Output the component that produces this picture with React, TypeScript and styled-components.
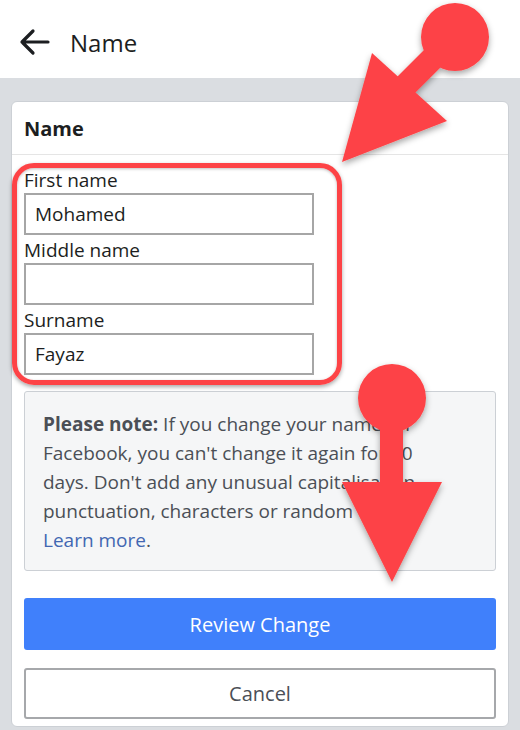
import React from "react";
import styled, { createGlobalStyle } from "styled-components";

const Global = createGlobalStyle`
  html, body { margin: 0; padding: 0; background: #dadde1; }
  body { font-family: "Open Sans", "Noto Sans", Arial, sans-serif; }
  * { box-sizing: border-box; }
`;

const Page = styled.div`
  position: relative;
  width: 520px;
  height: 730px;
  overflow: hidden;
  background: #dadde1;
  display: flex;
  flex-direction: column;
`;

const TopBar = styled.header`
  height: 78px;
  background: #ffffff;
  display: flex;
  align-items: center;
  gap: 20px;
  padding: 6px 0 0 18px;
  flex-shrink: 0;
`;

const TopTitle = styled.h1`
  margin: 0;
  font-size: 24px;
  font-weight: 400;
  color: #1c1e21;
`;

const Main = styled.main`
  padding: 23px 11px 0 11px;
  flex: 1;
`;

const Card = styled.section`
  background: #ffffff;
  border: 1px solid #ccd0d5;
  border-radius: 6px;
  height: 626px;
`;

const CardHead = styled.div`
  height: 53px;
  display: flex;
  align-items: center;
  padding: 0 12px;
  border-bottom: 1px solid #e5e5e5;
  font-size: 20px;
  font-weight: 700;
  color: #1c1e21;
`;

const CardBody = styled.div`
  padding: 10px 12px 9px 12px;
  display: flex;
  flex-direction: column;
`;

const Fields = styled.div`
  position: relative;
  display: flex;
  flex-direction: column;
  width: 290px;
`;

const Highlight = styled.div`
  position: absolute;
  left: -12px;
  top: -2px;
  width: 330px;
  height: 222px;
  border: 5px solid #fd4346;
  border-radius: 22px;
  box-shadow: 0 2px 4px rgba(0, 0, 0, 0.35), inset 0 1px 3px rgba(0, 0, 0, 0.25);
  pointer-events: none;
`;

const Label = styled.label`
  height: 28px;
  display: flex;
  align-items: flex-end;
  padding-bottom: 3px;
  font-size: 19px;
  color: #1c1e21;
  line-height: 1;
`;

const Input = styled.div`
  height: 42px;
  border: 2px solid #a6a6a6;
  padding: 0 9px;
  display: flex;
  align-items: center;
  font-size: 19px;
  color: #1c1e21;
`;

const Note = styled.div`
  margin-top: 16px;
  height: 180px;
  background: #f5f6f7;
  border: 1px solid #ccd0d5;
  border-radius: 3px;
  padding: 18px 17px 0 18px;
  font-size: 19px;
  line-height: 29px;
  color: #4b4f56;
  white-space: nowrap;
`;

const Strong = styled.strong`
  font-weight: 700;
`;

const Link = styled.span`
  color: #4267b2;
`;

const Button = styled.button<{ $primary?: boolean }>`
  width: 100%;
  height: ${(p) => (p.$primary ? "52px" : "51px")};
  margin-top: ${(p) => (p.$primary ? "27px" : "18px")};
  border-radius: 3px;
  font-family: inherit;
  font-size: 20px;
  display: flex;
  align-items: center;
  justify-content: center;
  border: ${(p) => (p.$primary ? "none" : "2px solid #a6a8ab")};
  background: ${(p) => (p.$primary ? "#4080fb" : "#ffffff")};
  color: ${(p) => (p.$primary ? "#ffffff" : "#4b4f56")};
`;

const Overlay = styled.svg`
  position: absolute;
  left: 0;
  top: 0;
  pointer-events: none;
`;

const Field = ({ label, value }: { label: string; value: string }) => (
  <>
    <Label>{label}</Label>
    <Input>{value}</Input>
  </>
);

export default function App() {
  return (
    <>
      <Global />
      <Page>
        <TopBar>
          <svg width="32" height="28" viewBox="0 0 32 28">
            <path
              d="M30 14H4M15 3L4 14l11 11"
              fill="none"
              stroke="#1c1e21"
              strokeWidth="3.2"
              strokeLinecap="round"
              strokeLinejoin="round"
            />
          </svg>
          <TopTitle>Name</TopTitle>
        </TopBar>
        <Main>
          <Card>
            <CardHead>Name</CardHead>
            <CardBody>
              <Fields>
                <Field label="First name" value="Mohamed" />
                <Field label="Middle name" value="" />
                <Field label="Surname" value="Fayaz" />
                <Highlight />
              </Fields>
              <Note>
                <Strong>Please note:</Strong> If you change your name on
                <br />
                Facebook, you can't change it again for 60
                <br />
                days. Don't add any unusual capitalisation,
                <br />
                punctuation, characters or random words.
                <br />
                <Link>Learn more</Link>.
              </Note>
              <Button $primary>Review Change</Button>
              <Button>Cancel</Button>
            </CardBody>
          </Card>
        </Main>
        <Overlay width="520" height="730" viewBox="0 0 520 730">
          <defs>
            <filter id="sh" x="-20%" y="-20%" width="140%" height="140%">
              <feDropShadow dx="0" dy="3" stdDeviation="3" floodColor="#000" floodOpacity="0.35" />
            </filter>
          </defs>
          <g fill="#fd4346" filter="url(#sh)">
            <circle cx="455" cy="37" r="34" />
            <path d="M446 28 L463 45 L406 102 L389 85 Z" />
            <path d="M372 53 L447 121 L342 162 Z" />
          </g>
          <g fill="#fd4346" filter="url(#sh)">
            <circle cx="392" cy="398" r="34" />
            <rect x="380" y="398" width="23" height="90" />
            <path d="M342 482 L442 482 L392 582 Z" />
          </g>
        </Overlay>
      </Page>
    </>
  );
}
